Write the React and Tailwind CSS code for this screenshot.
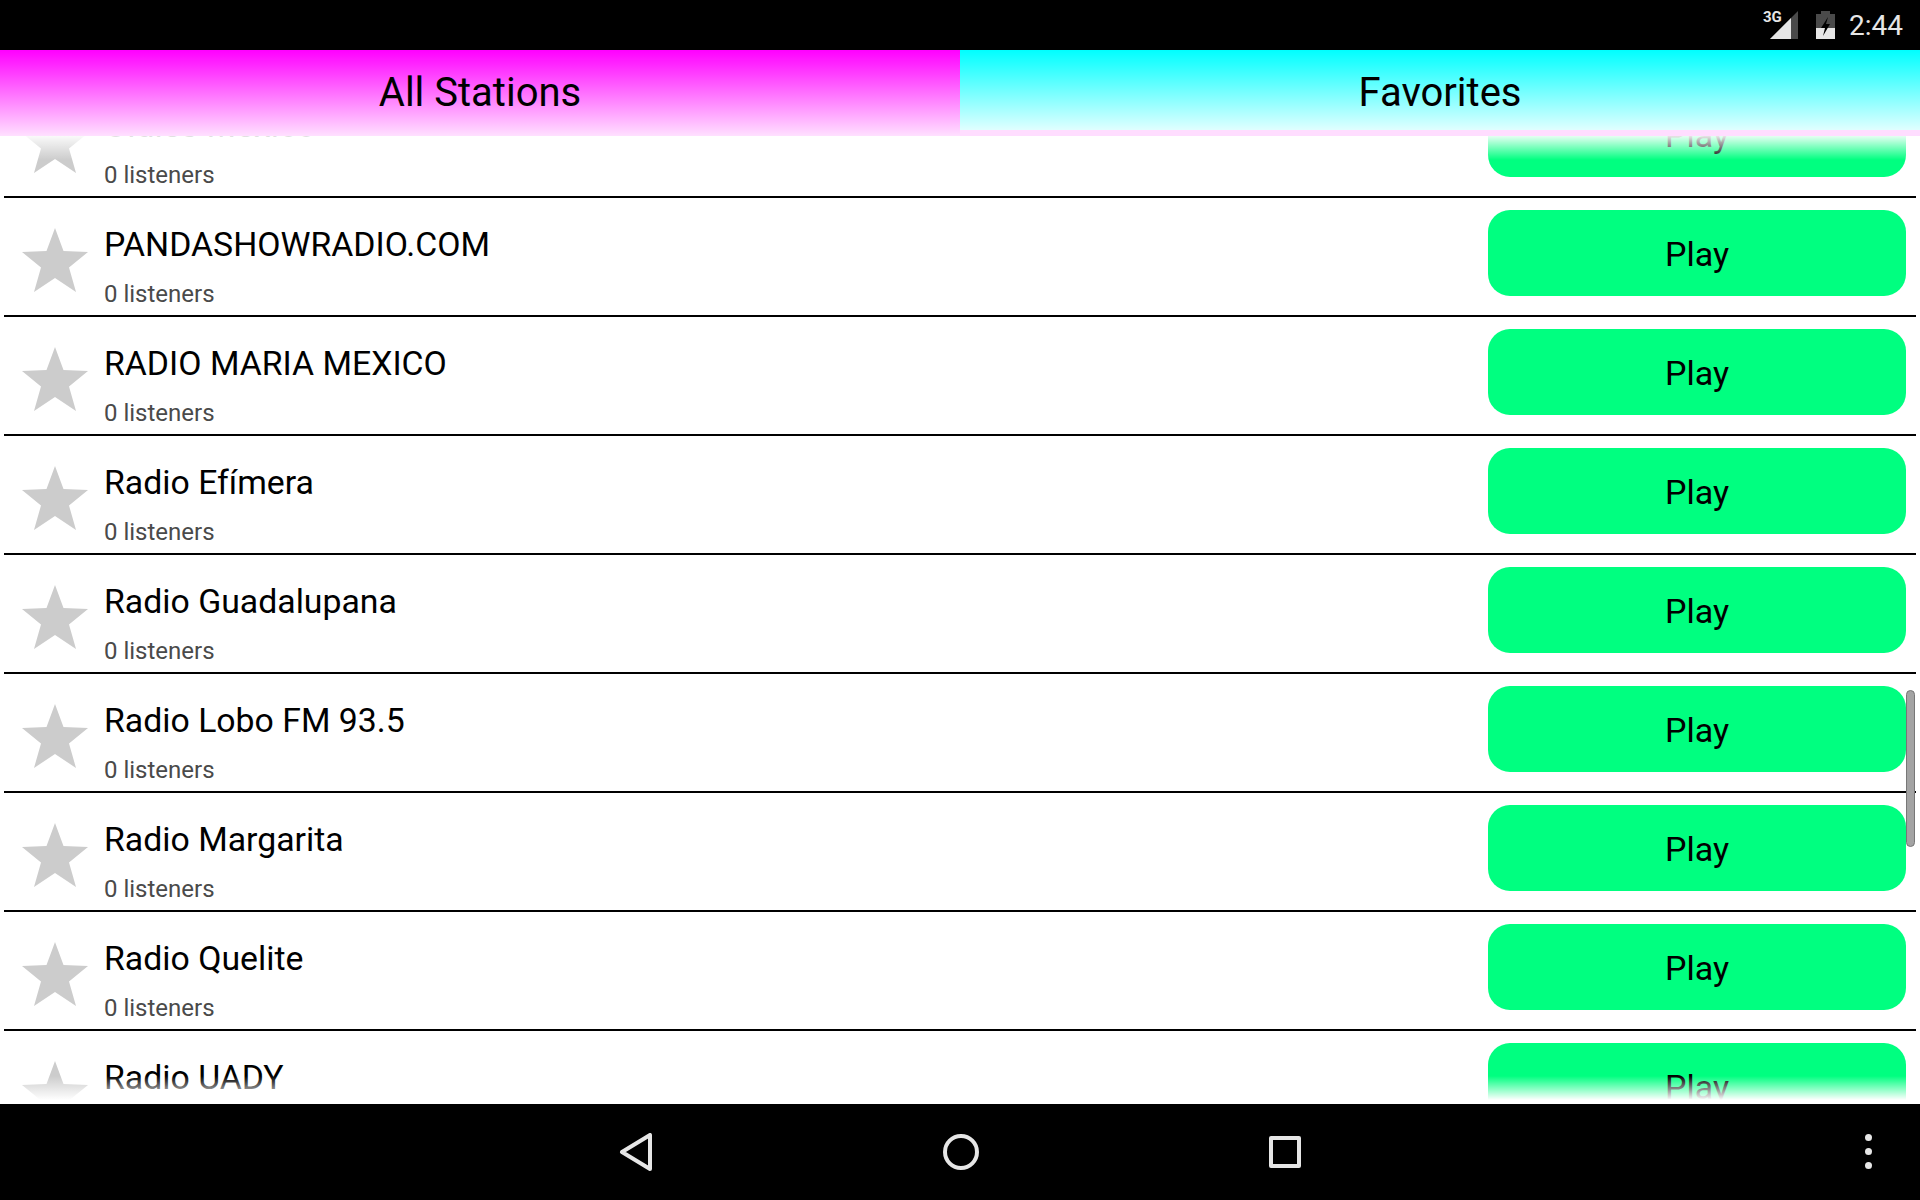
const stations = [
  "Oldies México",
  "PANDASHOWRADIO.COM",
  "RADIO MARIA MEXICO",
  "Radio Efímera",
  "Radio Guadalupana",
  "Radio Lobo FM 93.5",
  "Radio Margarita",
  "Radio Quelite",
  "Radio UADY",
];

function StatusBar() {
  return (
    <div className="h-[50px] shrink-0 bg-black flex items-center justify-end pr-[17px] text-[#e6e6e6]">
      <div className="relative w-[28px] h-[28px] mr-[18px]">
        <svg width="28" height="28" viewBox="0 0 28 28" className="absolute left-0 top-0">
          <path d="M0 28 L28 0 V28 Z" fill="#4a4a4a" />
          <path d="M0 28 L21 7 V28 Z" fill="#e6e6e6" />
        </svg>
        <span className="absolute left-[-7px] top-[-1px] text-[15px] font-bold leading-[15px]">3G</span>
      </div>
      <svg width="19" height="28" viewBox="0 0 19 28" className="mr-[14px]">
        <path d="M5 0 H14 V3 H19 V28 H0 V3 H5 Z" fill="#4a4a4a" />
        <path d="M0 17 H19 V28 H0 Z" fill="#e6e6e6" />
        <path d="M12 6 L5 17 H9 L7 25 L14 13 H10 L12 6 Z" fill="#000" />
      </svg>
      <span className="text-[28px] leading-none mt-[2px]">2:44</span>
    </div>
  );
}

function Tabs() {
  return (
    <div className="h-[86px] shrink-0 flex bg-[#ffddff] relative z-10 text-[40px] text-black">
      <div className="w-1/2 h-[86px] bg-linear-to-b/srgb from-[#ff00ff] to-[#ffe0ff] flex items-center justify-center">
        All Stations
      </div>
      <div className="w-1/2 h-[80px] bg-linear-to-b/srgb from-[#00ffff] to-[#e0ffff] flex items-center justify-center pt-[6px]">
        Favorites
      </div>
    </div>
  );
}

function StationRow({ name }) {
  return (
    <div className="h-[119px] shrink-0 mx-[4px] border-b-2 border-black flex items-start">
      <svg width="66" height="64" viewBox="0 0 66 64" className="ml-[18px] mt-[30px] shrink-0 blur-[0.5px]">
        <path d="M33 0 L41.5 23 L66 24 L47 39.5 L54 64 L33 50 L12 64 L19 39.5 L0 24 L24.5 23 Z" fill="#cccccc" />
      </svg>
      <div className="ml-[16px] flex-1 pt-[27px]">
        <div className="text-[33.8px] leading-[40px] text-black">{name}</div>
        <div className="text-[24px] leading-[28px] text-[#4a4a4a] mt-[15px]">0 listeners</div>
      </div>
      <button className="w-[418px] h-[86px] mr-[10px] mt-[12px] pt-[2px] rounded-[22px] bg-[#00ff80] text-[34px] text-black">
        Play
      </button>
    </div>
  );
}

function NavBar() {
  return (
    <div className="h-[96px] shrink-0 bg-black relative z-10 flex items-center justify-center gap-[290px]">
      <svg width="34" height="38" viewBox="0 0 34 38" fill="none" stroke="#e6e6e6" strokeWidth="4" strokeLinejoin="round">
        <path d="M31 2 V36 L3 19 Z" />
      </svg>
      <svg width="36" height="36" viewBox="0 0 36 36" fill="none" stroke="#e6e6e6" strokeWidth="4">
        <circle cx="18" cy="18" r="16" />
      </svg>
      <svg width="32" height="32" viewBox="0 0 32 32" fill="none" stroke="#e6e6e6" strokeWidth="4" strokeLinejoin="round">
        <rect x="2" y="2" width="28" height="28" />
      </svg>
      <div className="absolute right-[48px] top-[30px] flex flex-col gap-[7px]">
        <div className="w-[7px] h-[7px] rounded-full bg-[#e6e6e6]" />
        <div className="w-[7px] h-[7px] rounded-full bg-[#e6e6e6]" />
        <div className="w-[7px] h-[7px] rounded-full bg-[#e6e6e6]" />
      </div>
    </div>
  );
}

export default function App() {
  return (
    <div className="w-[1920px] h-[1200px] flex flex-col overflow-hidden bg-white" style={{ fontFamily: "Roboto, sans-serif" }}>
      <StatusBar />
      <Tabs />
      <div className="relative flex-1 overflow-hidden">
        <div className="flex flex-col -mt-[57px]">
          {stations.map(s => <StationRow key={s} name={s} />)}
        </div>
        <div className="absolute top-0 left-0 right-0 h-[24px] bg-linear-to-b/srgb from-white/90 to-white/0" />
        <div className="absolute bottom-[4px] left-0 right-0 h-[24px] bg-linear-to-t/srgb from-white to-white/0" />
        <div className="absolute bottom-0 left-0 right-0 h-[4px] bg-white" />
        <div className="absolute right-[5px] top-[554px] w-[9px] h-[157px] rounded-full bg-[#a3a3a3] border border-[#777777]" />
      </div>
      <NavBar />
    </div>
  );
}
